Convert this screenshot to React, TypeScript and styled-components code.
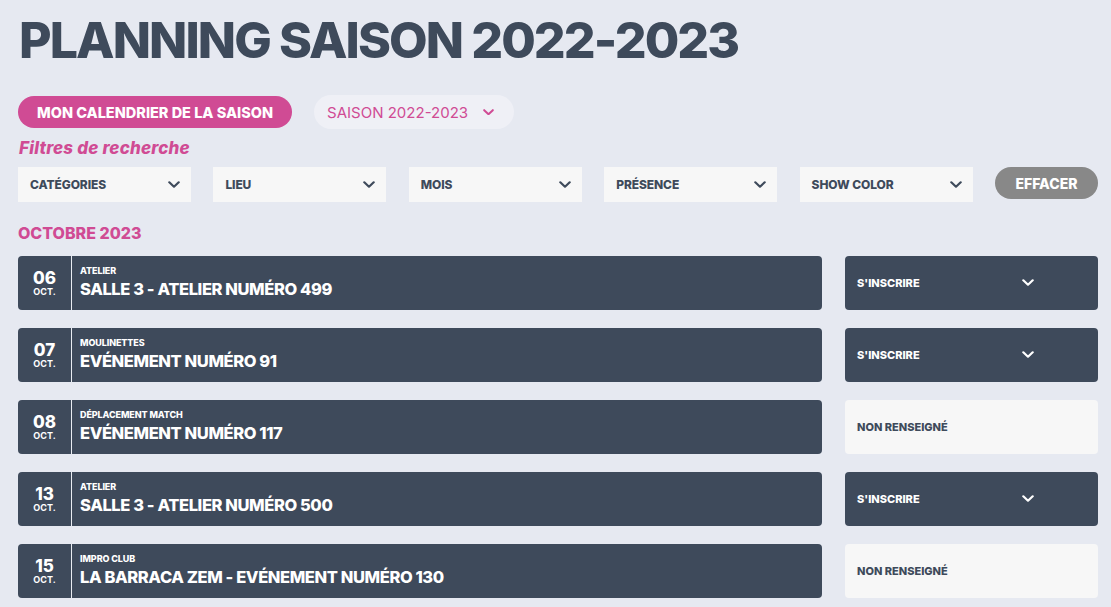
import React from "react";
import styled, { createGlobalStyle } from "styled-components";

const C = {
  bg: "#e6e9f1",
  dark: "#3e4a5b",
  pink: "#d04b94",
  light: "#f7f7f7",
  gray: "#888888",
  pill: "#eff0f6",
};

const Global = createGlobalStyle`
  html, body { margin: 0; padding: 0; background: ${C.bg}; }
  body { font-family: "Inter", "Open Sans", sans-serif; -webkit-font-smoothing: antialiased; }
  * { box-sizing: border-box; }
`;

const Page = styled.main`
  width: 1111px;
  padding: 15px 13px 0 18px;
  display: flex;
  flex-direction: column;
`;

const Title = styled.h1`
  margin: 0 0 0 1px;
  height: 50px;
  font-size: 50px;
  line-height: 50px;
  font-weight: 800;
  color: ${C.dark};
  letter-spacing: -1.9px;
  white-space: nowrap;
`;

const Actions = styled.div`
  margin-top: 30px;
  display: flex;
  align-items: center;
  gap: 22px;
`;

const PinkPill = styled.button`
  height: 32px;
  padding: 0 19px;
  border: none;
  border-radius: 16px;
  background: ${C.pink};
  color: #fff;
  font-family: inherit;
  font-size: 14.5px;
  font-weight: 800;
  letter-spacing: 0;
  cursor: pointer;
`;

const SeasonSelect = styled.div`
  width: 200px;
  height: 34px;
  border-radius: 17px;
  background: ${C.pill};
  display: flex;
  align-items: center;
  padding: 0 0 0 13px;
  gap: 15px;
  color: ${C.pink};
  font-size: 15px;
  font-weight: 400;
`;

const FilterLabel = styled.div`
  margin-top: 9px;
  height: 20px;
  line-height: 20px;
  font-size: 17px;
  font-weight: 800;
  font-style: italic;
  color: ${C.pink};
  letter-spacing: 0.2px;
  padding-left: 1px;
`;

const Filters = styled.div`
  margin-top: 9px;
  display: grid;
  grid-template-columns: repeat(5, 173px) 103px;
  justify-content: space-between;
  align-items: start;
`;

const FilterBox = styled.div`
  height: 35px;
  background: ${C.light};
  display: flex;
  align-items: center;
  justify-content: space-between;
  padding: 0 11px 0 12px;
  color: ${C.dark};
  font-size: 12px;
  font-weight: 800;
  letter-spacing: -0.1px;
`;

const ClearButton = styled.button`
  height: 32px;
  border: none;
  border-radius: 16px;
  background: ${C.gray};
  color: #fff;
  font-family: inherit;
  font-size: 14px;
  font-weight: 800;
  padding: 0;
`;

const Month = styled.h2`
  margin: 21px 0 0 0;
  height: 20px;
  line-height: 20px;
  font-size: 16px;
  font-weight: 800;
  color: ${C.pink};
  letter-spacing: 0;
`;

const List = styled.div`
  margin-top: 13px;
  display: flex;
  flex-direction: column;
  gap: 18px;
`;

const Row = styled.div`
  display: grid;
  grid-template-columns: 804px 253px;
  justify-content: space-between;
  height: 54px;
`;

const Card = styled.div`
  background: ${C.dark};
  border-radius: 4px;
  display: flex;
  color: #fff;
  overflow: hidden;
`;

const DateCol = styled.div`
  width: 54px;
  border-right: 1px solid #e9ecf2;
  display: flex;
  flex-direction: column;
  align-items: center;
  justify-content: center;
`;

const Day = styled.span`
  font-size: 17px;
  line-height: 18px;
  font-weight: 800;
`;

const MonthAbbr = styled.span`
  font-size: 9px;
  line-height: 10px;
  font-weight: 700;
`;

const Info = styled.div`
  display: flex;
  flex-direction: column;
  justify-content: center;
  padding: 0 0 2px 8px;
  gap: 3px;
`;

const Category = styled.span`
  font-size: 9px;
  line-height: 11px;
  font-weight: 800;
  letter-spacing: -0.1px;
`;

const EventTitle = styled.span`
  font-size: 16.5px;
  line-height: 20px;
  font-weight: 800;
  letter-spacing: -0.4px;
`;

const Status = styled.div<{ $dark: boolean }>`
  border-radius: 4px;
  background: ${(p) => (p.$dark ? C.dark : C.light)};
  color: ${(p) => (p.$dark ? "#fff" : C.dark)};
  display: flex;
  align-items: center;
  padding: 0 64px 0 12px;
  justify-content: space-between;
  font-size: 11px;
  font-weight: 800;
  letter-spacing: 0;
`;

const Chevron: React.FC<{ color: string; w?: number }> = ({ color, w = 12 }) => (
  <svg width={w} height={w * 0.6} viewBox="0 0 12 7" fill="none">
    <polyline
      points="1.3,1.2 6,5.6 10.7,1.2"
      stroke={color}
      strokeWidth="2.2"
      strokeLinecap="round"
      strokeLinejoin="round"
    />
  </svg>
);

const filters = ["CATÉGORIES", "LIEU", "MOIS", "PRÉSENCE", "SHOW COLOR"];

const events = [
  { day: "06", cat: "ATELIER", title: "SALLE 3 - ATELIER NUMÉRO 499", open: true },
  { day: "07", cat: "MOULINETTES", title: "EVÉNEMENT NUMÉRO 91", open: true },
  { day: "08", cat: "DÉPLACEMENT MATCH", title: "EVÉNEMENT NUMÉRO 117", open: false },
  { day: "13", cat: "ATELIER", title: "SALLE 3 - ATELIER NUMÉRO 500", open: true },
  { day: "15", cat: "IMPRO CLUB", title: "LA BARRACA ZEM - EVÉNEMENT NUMÉRO 130", open: false },
];

export default function App() {
  return (
    <>
      <Global />
      <Page>
        <Title>PLANNING SAISON 2022-2023</Title>
        <Actions>
          <PinkPill>MON CALENDRIER DE LA SAISON</PinkPill>
          <SeasonSelect>
            <span>SAISON 2022-2023</span>
            <Chevron color={C.pink} w={11} />
          </SeasonSelect>
        </Actions>
        <FilterLabel>Filtres de recherche</FilterLabel>
        <Filters>
          {filters.map((f) => (
            <FilterBox key={f}>
              <span>{f}</span>
              <Chevron color={C.dark} />
            </FilterBox>
          ))}
          <ClearButton>EFFACER</ClearButton>
        </Filters>
        <Month>OCTOBRE 2023</Month>
        <List>
          {events.map((e) => (
            <Row key={e.day}>
              <Card>
                <DateCol>
                  <Day>{e.day}</Day>
                  <MonthAbbr>OCT.</MonthAbbr>
                </DateCol>
                <Info>
                  <Category>{e.cat}</Category>
                  <EventTitle>{e.title}</EventTitle>
                </Info>
              </Card>
              <Status $dark={e.open}>
                <span>{e.open ? "S'INSCRIRE" : "NON RENSEIGNÉ"}</span>
                {e.open && <Chevron color="#fff" />}
              </Status>
            </Row>
          ))}
        </List>
      </Page>
    </>
  );
}
